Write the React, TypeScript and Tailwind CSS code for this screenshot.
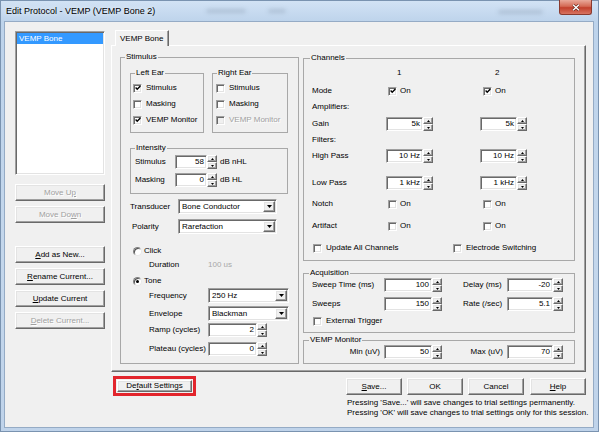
import React from 'react';

const raised =
  'bg-[#f0f0f0] border border-t-white border-l-white border-r-[#696969] border-b-[#696969] shadow-[inset_-1px_-1px_0_#a0a0a0,inset_1px_1px_0_#e3e3e3]';
const sunken =
  'border border-t-[#a0a0a0] border-l-[#a0a0a0] border-r-white border-b-white shadow-[inset_1px_1px_0_#696969,inset_-1px_-1px_0_#e3e3e3]';
const grayText = 'text-[#a0a0a0] [text-shadow:1px_1px_0_#fff]';

type Kids = { children?: React.ReactNode; className?: string };

function Btn({ children, className = '', disabled = false }: Kids & { disabled?: boolean }) {
  return (
    <button
      type="button"
      className={`${raised} h-[17px] flex items-center justify-center leading-[10px] ${disabled ? grayText : 'text-black'} ${className}`}
    >
      {children}
    </button>
  );
}

function Check({ checked = false, disabled = false }: { checked?: boolean; disabled?: boolean }) {
  return (
    <span
      className={`${sunken} ${disabled ? 'bg-[#f0f0f0]' : 'bg-white'} w-[9px] h-[9px] shrink-0 flex items-center justify-center`}
    >
      {checked && (
        <svg width="6" height="6" viewBox="0 0 6 6">
          <path d="M0.6 2.6 L2.2 4.3 L5.4 0.9" fill="none" stroke="#000" strokeWidth="1.4" />
        </svg>
      )}
    </span>
  );
}

function CheckLabel({
  label,
  checked = false,
  disabled = false,
  className = '',
}: {
  label: string;
  checked?: boolean;
  disabled?: boolean;
  className?: string;
}) {
  return (
    <div className={`flex items-center gap-[4px] ${className}`}>
      <Check checked={checked} disabled={disabled} />
      <span className={disabled ? grayText : ''}>{label}</span>
    </div>
  );
}

function Radio({ checked = false }: { checked?: boolean }) {
  return (
    <span className="w-[9px] h-[9px] rounded-full bg-white border border-t-[#808080] border-l-[#808080] border-r-[#e8e8e8] border-b-[#e8e8e8] shadow-[inset_1px_1px_0_#505050] flex items-center justify-center shrink-0">
      {checked && <span className="w-[3px] h-[3px] rounded-full bg-black" />}
    </span>
  );
}

function Spin({ value, field, className = '' }: { value: string; field: string; className?: string }) {
  return (
    <div className={`flex h-[14px] shrink-0 ${className}`}>
      <div className={`${sunken} bg-white ${field} flex items-center justify-end pr-[2px] whitespace-nowrap`}>
        {value}
      </div>
      <div className="w-[10px] flex flex-col">
        <div className={`${raised} h-[7px] flex items-center justify-center`}>
          <svg width="3" height="2" viewBox="0 0 3 2">
            <polygon points="0,2 1.5,0 3,2" fill="#000" />
          </svg>
        </div>
        <div className={`${raised} h-[7px] flex items-center justify-center`}>
          <svg width="3" height="2" viewBox="0 0 3 2">
            <polygon points="0,0 3,0 1.5,2" fill="#000" />
          </svg>
        </div>
      </div>
    </div>
  );
}

function Combo({ value, className = '' }: { value: string; className?: string }) {
  return (
    <div className={`${sunken} bg-white h-[15px] flex items-center pl-[3px] pr-[1px] shrink-0 ${className}`}>
      <span className="flex-1 whitespace-nowrap">{value}</span>
      <span className={`${raised} w-[12px] h-[11px] flex items-center justify-center`}>
        <svg width="5" height="3" viewBox="0 0 5 3">
          <polygon points="0,0 5,0 2.5,3" fill="#000" />
        </svg>
      </span>
    </div>
  );
}

function Group({
  title,
  className = '',
  legend = 'ml-[4px]',
  children,
}: Kids & { title: string; legend?: string }) {
  return (
    <fieldset className={`border border-[#a8a8a8] min-w-0 shrink-0 ${className}`}>
      <legend className={`${legend} px-[1px] leading-[10px]`}>{title}</legend>
      {children}
    </fieldset>
  );
}

function ChannelRow({ label, className = '', one, two }: { label: string; className?: string; one?: React.ReactNode; two?: React.ReactNode }) {
  return (
    <div className={`flex items-center ${className}`}>
      <span className="w-[74px] shrink-0">{label}</span>
      <div className="w-[94px] shrink-0 flex items-center">{one}</div>
      <div className="flex items-center">{two}</div>
    </div>
  );
}

function OnBox({ checked = false, className = '' }: { checked?: boolean; className?: string }) {
  return (
    <div className={`flex items-center gap-[3px] ${className}`}>
      <Check checked={checked} />
      <span>On</span>
    </div>
  );
}

function Stimulus() {
  return (
    <Group title="Stimulus" legend="ml-[4px]" className="w-[179px] h-[312px]">
      <div className="pl-[9px]">
        <div className="flex gap-[8px] mt-[6px]">
          <Group title="Left Ear" className="w-[74px] h-[65px]">
            <div className="pl-[2px] pt-[2px]">
              <CheckLabel label="Stimulus" checked className="h-[16px]" />
              <CheckLabel label="Masking" className="h-[16px]" />
              <CheckLabel label="VEMP Monitor" checked className="h-[16px]" />
            </div>
          </Group>
          <Group title="Right Ear" className="w-[76px] h-[65px]">
            <div className="pl-[3px] pt-[2px]">
              <CheckLabel label="Stimulus" className="h-[16px]" />
              <CheckLabel label="Masking" className="h-[16px]" />
              <CheckLabel label="VEMP Monitor" disabled className="h-[16px]" />
            </div>
          </Group>
        </div>

        <Group title="Intensity" className="w-[158px] h-[51px] mt-[10px]">
          <div className="pl-[4px] pt-[2px]">
            <div className="flex items-center h-[14px]">
              <span className="w-[40px] shrink-0">Stimulus</span>
              <Spin value="58" field="w-[32px]" />
              <span className="ml-[3px]">dB nHL</span>
            </div>
            <div className="flex items-center h-[14px] mt-[4px]">
              <span className="w-[40px] shrink-0">Masking</span>
              <Spin value="0" field="w-[32px]" />
              <span className="ml-[3px]">dB HL</span>
            </div>
          </div>
        </Group>

        <div className="flex items-center h-[15px] mt-[5px]">
          <span className="w-[48px] shrink-0">Transducer</span>
          <Combo value="Bone Conductor" className="w-[99px]" />
        </div>
        <div className="flex items-center h-[15px] mt-[5px]">
          <span className="w-[48px] shrink-0 pl-[2px]">Polarity</span>
          <Combo value="Rarefaction" className="w-[99px]" />
        </div>

        <div className="flex items-center gap-[2px] h-[14px] mt-[10px] pl-[3px]">
          <Radio />
          <span>Click</span>
        </div>
        <div className="flex items-center h-[14px] pl-[19px]">
          <span className="w-[59px] shrink-0">Duration</span>
          <span className="text-[#a8a8a8]">100 us</span>
        </div>
        <div className="flex items-center gap-[2px] h-[14px] mt-[2px] pl-[3px]">
          <Radio checked />
          <span>Tone</span>
        </div>
        <div className="flex items-center h-[15px] pl-[19px]">
          <span className="w-[59px] shrink-0">Frequency</span>
          <Combo value="250 Hz" className="w-[81px]" />
        </div>
        <div className="flex items-center h-[15px] mt-[3px] pl-[19px]">
          <span className="w-[59px] shrink-0">Envelope</span>
          <Combo value="Blackman" className="w-[81px]" />
        </div>
        <div className="flex items-center h-[14px] mt-[2px] pl-[19px]">
          <span className="w-[59px] shrink-0">Ramp (cycles)</span>
          <Spin value="2" field="w-[49px]" />
        </div>
        <div className="flex items-center h-[14px] mt-[5px] pl-[19px]">
          <span className="w-[59px] shrink-0">Plateau (cycles)</span>
          <Spin value="0" field="w-[49px]" />
        </div>
      </div>
    </Group>
  );
}

function Channels() {
  return (
    <Group title="Channels" legend="ml-[6px]" className="h-[208px] mt-[1px]">
      <div className="pl-[8px]">
        <ChannelRow
          label=""
          className="h-[12px] mt-[4px]"
          one={<span className="pl-[11px]">1</span>}
          two={<span className="pl-[15px]">2</span>}
        />
        <ChannelRow
          label="Mode"
          className="h-[12px] mt-[6px]"
          one={<OnBox checked className="pl-[2px]" />}
          two={<OnBox checked className="pl-[3px]" />}
        />
        <ChannelRow label="Amplifiers:" className="h-[12px] mt-[4px]" />
        <ChannelRow
          label="Gain"
          className="h-[14px] mt-[4px]"
          one={<Spin value="5k" field="w-[37px]" />}
          two={<Spin value="5k" field="w-[37px]" />}
        />
        <ChannelRow label="Filters:" className="h-[12px] mt-[3px]" />
        <ChannelRow
          label="High Pass"
          className="h-[14px] mt-[3px]"
          one={<Spin value="10 Hz" field="w-[37px]" />}
          two={<Spin value="10 Hz" field="w-[37px]" />}
        />
        <ChannelRow
          label="Low Pass"
          className="h-[14px] mt-[13px]"
          one={<Spin value="1 kHz" field="w-[37px]" />}
          two={<Spin value="1 kHz" field="w-[37px]" />}
        />
        <ChannelRow
          label="Notch"
          className="h-[12px] mt-[8px]"
          one={<OnBox className="pl-[2px]" />}
          two={<OnBox className="pl-[3px]" />}
        />
        <ChannelRow
          label="Artifact"
          className="h-[12px] mt-[10px]"
          one={<OnBox className="pl-[2px]" />}
          two={<OnBox className="pl-[3px]" />}
        />
        <div className="flex items-center h-[12px] mt-[10px]">
          <CheckLabel label="Update All Channels" className="w-[141px] shrink-0 pl-[1px]" />
          <CheckLabel label="Electrode Switching" />
        </div>
      </div>
    </Group>
  );
}

function Acquisition() {
  return (
    <Group title="Acquisition" legend="ml-[5px]" className="h-[65px] mt-[7px]">
      <div className="pl-[8px]">
        <div className="flex items-center h-[14px]">
          <span className="w-[72px] shrink-0">Sweep Time (ms)</span>
          <Spin value="100" field="w-[48px]" />
          <span className="w-[44px] shrink-0 ml-[21px]">Delay (ms)</span>
          <Spin value="-20" field="w-[46px]" />
        </div>
        <div className="flex items-center h-[14px] mt-[5px]">
          <span className="w-[72px] shrink-0">Sweeps</span>
          <Spin value="150" field="w-[48px]" />
          <span className="w-[44px] shrink-0 ml-[21px]">Rate (/sec)</span>
          <Spin value="5.1" field="w-[46px]" />
        </div>
        <CheckLabel label="External Trigger" className="h-[12px] mt-[4px] pl-[1px]" />
      </div>
    </Group>
  );
}

function VempMonitor() {
  return (
    <Group title="VEMP Monitor" legend="ml-[5px]" className="h-[29px] mt-[2px]">
      <div className="pl-[8px]">
        <div className="flex items-center h-[14px]">
          <span className="w-[72px] shrink-0 text-right pr-[4px]">Min (uV)</span>
          <Spin value="50" field="w-[48px]" />
          <span className="w-[65px] shrink-0 text-right pr-[4px]">Max (uV)</span>
          <Spin value="70" field="w-[46px]" />
        </div>
      </div>
    </Group>
  );
}

export default function App() {
  return (
    <div className="w-[599px] h-[432px] overflow-hidden flex flex-col bg-[linear-gradient(#d3e3f5,#bdd3eb_22px,#c4d7ec_60%,#bfd3ea)] shadow-[inset_0_0_0_1px_#7a93b0] text-[8px] leading-[10px] text-black [font-family:'Liberation_Sans',Arial,sans-serif]">
      {/* title bar */}
      <div className="h-[22px] shrink-0 flex items-start">
        <span className="w-[200px] shrink-0 ml-[6px] mt-[6px] text-[9px] leading-[10px] whitespace-nowrap [text-shadow:0_0_5px_#fff]">
          Edit Protocol - VEMP (VEMP Bone 2)
        </span>
        <span className="mt-[9px] w-[40px] h-[4px] rounded-full bg-[#8799ad] opacity-40 blur-[2px]" />
        <span className="mt-[9px] ml-[22px] w-[18px] h-[4px] rounded-full bg-[#8799ad] opacity-40 blur-[2px]" />
        <span className="mt-[10px] ml-[212px] w-[45px] h-[4px] rounded-full bg-[#8799ad] opacity-40 blur-[2px]" />
        <div className="ml-auto mr-[7px] w-[33px] h-[15px] rounded-b-[3px] border border-[#8a3a2e] border-t-0 bg-[linear-gradient(#e9a99a,#d46a55_45%,#c2402c_55%,#d87461)] flex items-center justify-center">
          <svg width="8" height="7" viewBox="0 0 8 7">
            <path d="M1 0.8 L7 6.2 M7 0.8 L1 6.2" stroke="#5a1d14" strokeWidth="2.6" />
            <path d="M1 0.8 L7 6.2 M7 0.8 L1 6.2" stroke="#fff" strokeWidth="1.5" />
          </svg>
        </div>
      </div>

      {/* client area */}
      <div className="ml-[5px] w-[588px] h-[405px] shrink-0 bg-[#f0f0f0] shadow-[0_0_0_1px_#95abc5] flex pt-[8px]">
        <div className="ml-[10px] w-[90px] shrink-0 flex flex-col">
          <div className={`${sunken} bg-white h-[144px] mt-[1px] p-[1px]`}>
            <div className="bg-[#3399ff] text-white h-[11px] leading-[11px] pl-[2px]">VEMP Bone</div>
          </div>
          <Btn disabled className="mt-[9px]">
            Move U<u>p</u>
          </Btn>
          <Btn disabled className="mt-[5px]">
            Move Do<u>w</u>n
          </Btn>
          <Btn className="mt-[23px]">
            <u>A</u>dd as New...
          </Btn>
          <Btn className="mt-[5px]">
            <u>R</u>ename Current...
          </Btn>
          <Btn className="mt-[5px]">
            <u>U</u>pdate Current
          </Btn>
          <Btn disabled className="mt-[5px]">
            <u>D</u>elete Current...
          </Btn>
        </div>

        <div className="ml-[6px] w-[475px] shrink-0 flex flex-col">
          <div className="h-[15px] flex">
            <div className="relative z-10 ml-[4px] w-[54px] h-[16px] bg-[#f0f0f0] border-t border-l border-white border-r border-r-[#696969] shadow-[inset_-1px_0_0_#a0a0a0] flex items-center pl-[4px]">
              VEMP Bone
            </div>
          </div>
          <div className="h-[327px] border border-t-white border-l-white border-r-[#696969] border-b-[#696969] shadow-[inset_-1px_-1px_0_#a0a0a0] flex gap-[4px] pl-[8px] pt-[6px]">
            <Stimulus />
            <div className="w-[272px] shrink-0 flex flex-col">
              <Channels />
              <Acquisition />
              <VempMonitor />
            </div>
          </div>

          <div className="flex mt-[4px]">
            <div className="ml-[2px] w-[83px] h-[20px] border-[3px] border-[#e2252c] p-[1px] flex">
              <Btn className="flex-1 h-full">
                De<u>f</u>ault Settings
              </Btn>
            </div>
            <div className="ml-auto w-[240px] flex flex-col">
              <div className="flex mt-[2px]">
                <Btn className="w-[56px]">
                  <u>S</u>ave...
                </Btn>
                <Btn className="w-[56px] ml-[5px]">OK</Btn>
                <Btn className="w-[56px] ml-[5px]">Cancel</Btn>
                <Btn className="w-[56px] ml-[6px]">
                  <u>H</u>elp
                </Btn>
              </div>
              <p className="mt-[3px] pl-[1px] whitespace-nowrap">
                Pressing 'Save...' will save changes to trial settings permanently.
                <br />
                Pressing 'OK' will save changes to trial settings only for this session.
              </p>
            </div>
          </div>
        </div>
      </div>
    </div>
  );
}
